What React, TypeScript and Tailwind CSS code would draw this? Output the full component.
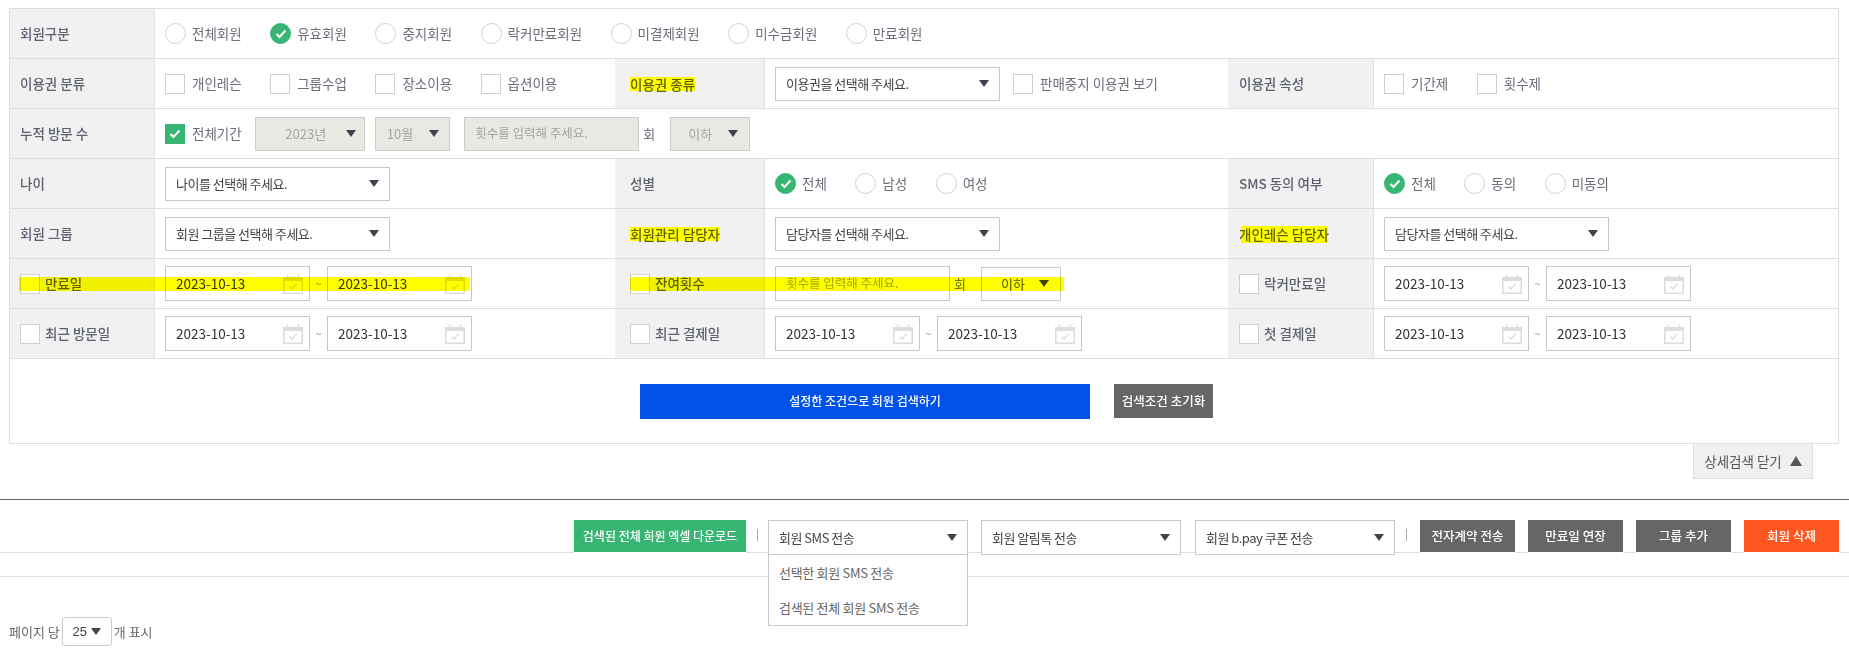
import type { ReactNode } from 'react';

const dateValue = '2023-10-13';

function Arrow({ className = '' }: { className?: string }) {
  return (
    <svg width="10" height="7" viewBox="0 0 10 7" className={`shrink-0 ${className}`}>
      <path d="M0 0h10L5 7z" fill="#3f4350" />
    </svg>
  );
}

function Check() {
  return (
    <svg width="12" height="10" viewBox="0 0 12 10" fill="none">
      <path d="M1.5 5l3 3 6-6.5" stroke="#fff" strokeWidth="2" />
    </svg>
  );
}

function Radio({ label, checked = false }: { label: string; checked?: boolean }) {
  return (
    <label className="flex items-center mr-[28.5px] text-[13.5px] text-[#6b6f7a]">
      <span
        className={`flex items-center justify-center w-[21px] h-[21px] rounded-full border mr-[6px] ${
          checked ? 'bg-[#36b573] border-[#36b573]' : 'bg-white border-[#cfcfcf]'
        }`}
      >
        {checked && <Check />}
      </span>
      {label}
    </label>
  );
}

function Checkbox({ label, checked = false }: { label: string; checked?: boolean }) {
  return (
    <label className="flex items-center mr-[28.5px] text-[13.5px] text-[#6b6f7a]">
      <span
        className={`flex items-center justify-center w-[20px] h-[20px] border mr-[7px] ${
          checked ? 'bg-[#36b573] border-[#36b573]' : 'bg-white border-[#cfcfcf]'
        }`}
      >
        {checked && <Check />}
      </span>
      {label}
    </label>
  );
}

// width and height come from the caller
function Select({ text, className = '' }: { text: string; className?: string }) {
  return (
    <div className={`flex items-center justify-between pl-[10px] pr-[10px] bg-white border border-[#c8c8c8] text-[13px] tracking-[-0.5px] text-[#444] ${className}`}>
      <span>{text}</span>
      <Arrow />
    </div>
  );
}

function DisabledSelect({ text, className = 'gap-[16px] pr-[10px]' }: { text: string; className?: string }) {
  return (
    <div className={`flex items-center justify-end h-[34px] bg-[#e9e9e4] border border-[#cccccc] text-[13px] text-[#a3a3a3] ${className}`}>
      <span>{text}</span>
      <Arrow />
    </div>
  );
}

function CalendarIcon() {
  return (
    <svg width="20" height="20" viewBox="0 0 20 20" fill="none" className="shrink-0">
      <rect x="0.75" y="3.75" width="18.5" height="15.5" stroke="#dcdcdc" strokeWidth="1.5" />
      <rect x="1" y="4" width="18" height="3" fill="#dcdcdc" />
      <path d="M4.5 0.5v5M15.5 0.5v5M8 2.5v2M12 2.5v2" stroke="#dcdcdc" strokeWidth="1.5" />
      <path d="M6.5 12.5l2.5 2.5 4.5-5" stroke="#dcdcdc" strokeWidth="1.4" />
    </svg>
  );
}

function DateBox() {
  return (
    <div className="flex items-center justify-between w-[145px] h-[35px] pl-[10px] pr-[6px] border border-[#c8c8c8] text-[13.5px] text-[#333]">
      <span>{dateValue}</span>
      <CalendarIcon />
    </div>
  );
}

function DateRange() {
  return (
    <div className="flex items-center">
      <DateBox />
      <span className="w-[17px] text-center text-[11px] text-[#999]">~</span>
      <DateBox />
    </div>
  );
}

function Label({ children, check = false, className = 'pl-[10px]' }: { children: ReactNode; check?: boolean; className?: string }) {
  return (
    <div className={`flex items-center h-full bg-[#f1f1f1] text-[13.5px] font-medium text-[#5c6170] ${className}`}>
      {check && <span className="w-[20px] h-[20px] mr-[5px] bg-white border border-[#cfcfcf]" />}
      {children}
    </div>
  );
}

function Value({ children, className = '' }: { children?: ReactNode; className?: string }) {
  return <div className={`flex items-center h-full pl-[10px] border-l border-[#e0e0e0] ${className}`}>{children}</div>;
}

function Row({ children }: { children: ReactNode }) {
  return (
    <div className="grid grid-cols-[144px_461px_149px_464px_145px_1fr] h-[50px] border-b border-[#dddddd]">
      {children}
    </div>
  );
}

function Mark({ children, className = '-inset-y-0 inset-x-0' }: { children: ReactNode; className?: string }) {
  return (
    <span className="relative isolate inline-block leading-[14px] text-[#5c6100]">
      <span className={`absolute -z-10 bg-[#ffff00] ${className}`} />
      {children}
    </span>
  );
}

function ActionButton({ text, color }: { text: string; color: string }) {
  return (
    <button className={`w-[95px] h-[33px] border-b border-white text-[12.5px] font-medium text-white ${color}`}>
      {text}
    </button>
  );
}

export default function App() {
  return (
    <div className="relative w-full h-[655px] overflow-hidden bg-white font-['Noto_Sans_CJK_KR',sans-serif]">
      {/* search form */}
      <div className="pt-[8px] pl-[9px] pr-[10px]">
        <div className="border-t border-x border-[#dddddd]">
          <Row>
            <Label>회원구분</Label>
            <Value className="col-span-5">
              <Radio label="전체회원" />
              <Radio label="유효회원" checked />
              <Radio label="중지회원" />
              <Radio label="락커만료회원" />
              <Radio label="미결제회원" />
              <Radio label="미수금회원" />
              <Radio label="만료회원" />
            </Value>
          </Row>
          <Row>
            <Label>이용권 분류</Label>
            <Value>
              <Checkbox label="개인레슨" />
              <Checkbox label="그룹수업" />
              <Checkbox label="장소이용" />
              <Checkbox label="옵션이용" />
            </Value>
            <Label className="pl-[15px]"><Mark>이용권 종류</Mark></Label>
            <Value>
              <Select text="이용권을 선택해 주세요." className="w-[225px] h-[34px] mr-[13px]" />
              <Checkbox label="판매중지 이용권 보기" />
            </Value>
            <Label className="pl-[11px]">이용권 속성</Label>
            <Value>
              <Checkbox label="기간제" />
              <Checkbox label="횟수제" />
            </Value>
          </Row>
          <Row>
            <Label>누적 방문 수</Label>
            <Value className="col-span-5">
              <Checkbox label="전체기간" checked />
              <DisabledSelect text="2023년" className="w-[110px] -ml-[15px] gap-[20px] pr-[8px]" />
              <DisabledSelect text="10월" className="w-[75px] ml-[10px] gap-[16px] pr-[10px]" />
              <div className="flex items-center w-[175px] h-[34px] ml-[14px] pl-[10px] bg-[#e9e9e4] border border-[#cccccc] text-[12.5px] text-[#a3a3a3]">
                횟수를 입력해 주세요.
              </div>
              <span className="ml-[4px] mr-[15px] text-[13px] text-[#6b6f7a]">회</span>
              <DisabledSelect text="이하" className="w-[80px] gap-[16px] pr-[11px]" />
            </Value>
          </Row>
          <Row>
            <Label>나이</Label>
            <Value><Select text="나이를 선택해 주세요." className="w-[225px] h-[34px]" /></Value>
            <Label className="pl-[15px]">성별</Label>
            <Value>
              <Radio label="전체" checked />
              <Radio label="남성" />
              <Radio label="여성" />
            </Value>
            <Label className="pl-[11px]">SMS 동의 여부</Label>
            <Value>
              <Radio label="전체" checked />
              <Radio label="동의" />
              <Radio label="미동의" />
            </Value>
          </Row>
          <Row>
            <Label>회원 그룹</Label>
            <Value><Select text="회원 그룹을 선택해 주세요." className="w-[225px] h-[34px]" /></Value>
            <Label className="pl-[15px]"><Mark>회원관리 담당자</Mark></Label>
            <Value><Select text="담당자를 선택해 주세요." className="w-[225px] h-[34px]" /></Value>
            <Label className="pl-[11px]">
              <Mark className="left-[2px] right-[1px] -top-[1px] h-[17px]">개인레슨 담당자</Mark>
            </Label>
            <Value><Select text="담당자를 선택해 주세요." className="w-[225px] h-[34px]" /></Value>
          </Row>
          <Row>
            <Label check>만료일</Label>
            <Value><DateRange /></Value>
            <Label check className="pl-[15px]">잔여횟수</Label>
            <Value>
              <div className="flex items-center w-[175px] h-[35px] pl-[10px] border border-[#c8c8c8] text-[12.5px] text-[#a3a3a3]">
                횟수를 입력해 주세요.
              </div>
              <span className="ml-[4px] mr-[15px] text-[13px] text-[#6b6f7a]">회</span>
              <div className="flex items-center justify-end gap-[14px] w-[80px] h-[34px] pr-[11px] border border-[#c8c8c8] text-[13px] text-[#555]">
                <span>이하</span>
                <Arrow />
              </div>
            </Value>
            <Label check className="pl-[11px]">락커만료일</Label>
            <Value><DateRange /></Value>
          </Row>
          <Row>
            <Label check>최근 방문일</Label>
            <Value><DateRange /></Value>
            <Label check className="pl-[15px]">최근 결제일</Label>
            <Value><DateRange /></Value>
            <Label check className="pl-[11px]">첫 결제일</Label>
            <Value><DateRange /></Value>
          </Row>
          <div className="flex items-center h-[85px] pl-[630px] border-b border-[#dddddd]">
            <button className="w-[450px] h-[35px] bg-[#0052ea] text-[12px] font-medium text-white">설정한 조건으로 회원 검색하기</button>
            <button className="w-[99px] h-[34px] ml-[24px] bg-[#666666] text-[12.5px] font-medium text-white">검색조건 초기화</button>
          </div>
        </div>
        <div className="flex justify-end pr-[26px]">
          <button className="flex items-center justify-center gap-[8px] w-[120px] h-[35px] bg-[#f0f0f0] border-x border-b border-[#dddddd] text-[13.5px] text-[#555]">
            상세검색 닫기
            <svg width="12" height="10" viewBox="0 0 12 10"><path d="M6 0l6 10H0z" fill="#555" /></svg>
          </button>
        </div>
      </div>

      <div className="mt-[20px] border-t border-[#666666]" />

      {/* list toolbar */}
      <div className="flex items-start justify-end h-[53px] pt-[20px] pr-[10px] border-b border-[#dddddd]">
        <button className="w-[172px] h-[33px] border-b border-white bg-[#36b573] text-[12px] font-medium text-white">검색된 전체 회원 엑셀 다운로드</button>
        <span className="w-[1px] h-[12px] mt-[9px] ml-[11px] mr-[10px] bg-[#aaaaaa]" />
        <div className="relative">
          <Select text="회원 SMS 전송" className="w-[200px] h-[35px]" />
          <div className="absolute z-10 left-0 top-[35px] w-[200px] bg-white border-x border-b border-[#c8c8c8] text-[13px] tracking-[-0.3px] text-[#666]">
            <div className="flex items-center h-[35px] pl-[10px]">선택한 회원 SMS 전송</div>
            <div className="flex items-center h-[35px] pl-[10px]">검색된 전체 회원 SMS 전송</div>
          </div>
        </div>
        <Select text="회원 알림톡 전송" className="w-[200px] h-[35px] ml-[13px]" />
        <Select text="회원 b.pay 쿠폰 전송" className="w-[200px] h-[35px] ml-[14px]" />
        <span className="w-[1px] h-[12px] mt-[9px] ml-[11px] mr-[13px] bg-[#aaaaaa]" />
        <div className="flex gap-[13px]">
          <ActionButton text="전자계약 전송" color="bg-[#666666]" />
          <ActionButton text="만료일 연장" color="bg-[#666666]" />
          <ActionButton text="그룹 추가" color="bg-[#666666]" />
          <ActionButton text="회원 삭제" color="bg-[#ff5722]" />
        </div>
      </div>
      <div className="h-[24px] border-b border-[#dddddd]" />

      {/* page size */}
      <div className="flex items-center mt-[40px] pl-[9px] text-[13px] text-[#666]">
        페이지 당
        <div className="flex items-center justify-center gap-[4px] w-[50px] h-[29px] mx-[2px] rounded-[3px] border border-[#cccccc] font-['Liberation_Sans',sans-serif] text-[13px] text-[#444]">
          25
          <Arrow />
        </div>
        개 표시
      </div>

      {/* highlighter strokes drawn over the form */}
      <div className="absolute left-[19px] top-[277px] w-[451px] h-[14px] rounded-[2px] bg-[#ffff00] mix-blend-multiply" />
      <div className="absolute left-[630px] top-[277px] w-[434px] h-[14px] rounded-[2px] bg-[#ffff00] mix-blend-multiply" />
    </div>
  );
}
